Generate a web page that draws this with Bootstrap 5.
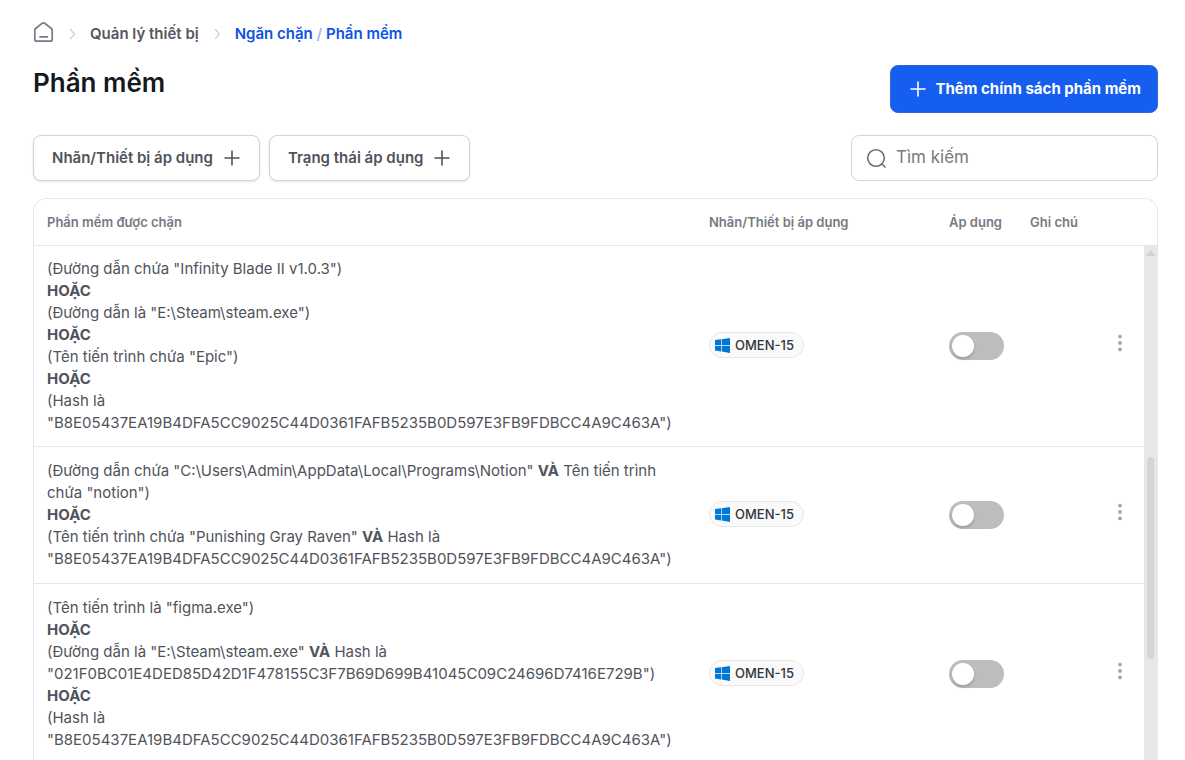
<!DOCTYPE html>
<html lang="vi">
<head>
<meta charset="utf-8">
<meta name="viewport" content="width=device-width, initial-scale=1">
<title>Phần mềm</title>
<link href="https://cdn.jsdelivr.net/npm/bootstrap@5.3.0/dist/css/bootstrap.min.css" rel="stylesheet">
<style>
body{font-family:Inter,"Noto Sans",sans-serif;font-size:15px;line-height:22px;color:#4b4f58;background:#fff}
.page{padding:21px 27px 0 33px}
.crumbs{gap:14px;height:26px;font-weight:600}
.crumbs a{text-decoration:none;color:#54575f}
.crumbs .current a{color:#0d53e6}
.crumbs .slash{color:#9db9f8}
.page-head{margin-top:18px;margin-bottom:22px}
.page-title{font-size:26px;line-height:36px;font-weight:600;color:#14181f}
.btn-add{height:48px;padding:0 16px 0 18px;gap:8px;border:1px solid #2e66dc;border-radius:8px;background:#155eef;color:#fff;font-size:15px;font-weight:700}
.btn-add:hover{background:#0f4fd0;color:#fff}
.toolbar{margin-bottom:17px}
.filters{gap:9px}
.btn-filter{height:46px;padding:0 18px;gap:10px;border:1px solid #d3d4d6;border-radius:8px;background:#fff;color:#50535b;font-size:15px;font-weight:600;box-shadow:0 1px 2px rgba(16,24,40,.12)}
.search{width:307px;height:46px;border:1px solid #d3d4d6;border-radius:8px;padding:0 14px;gap:9px}
.search input{font-size:17px;color:#4b4f58}
.search input::placeholder{color:#757a83;opacity:1}
.panel{min-height:0;border:1px solid #e7e7e7;border-bottom:0;border-radius:14px 14px 0 0;overflow:hidden}
.policies{table-layout:fixed;--bs-table-color:#50535b;--bs-table-bg:#fff;border-color:#e7e7e7}
.policies th{height:46px;padding:0 13px;font-size:13px;font-weight:600;color:#757a83;vertical-align:middle;white-space:nowrap}
.policies td{padding:13px}
.policies tbody tr:first-child td{padding-top:12px;padding-bottom:12px}
.policies strong{font-weight:700}
.c-device{width:240px}.c-apply{width:81px}.c-note{width:90px}.c-menu{width:50px}
.device{height:26px;padding:0 9px 0 5px;gap:5px;border:1px solid #e7e7e7;border-radius:13px;background:#fafafa;color:#30343b;font-size:13px;font-weight:500}
.form-switch .form-check-input.toggle{width:55px;height:28px;margin:0;float:none;border:0;background-color:#bdbdbd;background-image:none;box-shadow:none;position:relative}
.toggle::after{content:"";position:absolute;top:3px;left:3px;width:22px;height:22px;border-radius:50%;background:#fff;box-shadow:0 2px 3px rgba(0,0,0,.18);transition:left .2s}
.form-switch .form-check-input.toggle:checked{background-color:#155eef}
.toggle:checked::after{left:30px}
.kebab{width:26px;height:28px;margin-bottom:6px;border:0;background:none;color:#a2a4ab}
.scroll-track{position:absolute;top:47px;right:0;bottom:0;width:13px;background:#e7e7e7}
.scroll-track svg{position:absolute;top:4px;left:2px}
.scroll-thumb{position:absolute;top:41%;left:3px;width:7px;height:202px;border-radius:4px;background:#d5d5d5}
</style>
</head>
<body>
<svg class="d-none" aria-hidden="true">
<symbol id="plus" viewBox="0 0 16 16"><path d="M8 1v14M1 8h14" fill="none" stroke="currentColor" stroke-width="1.6" stroke-linecap="round"/></symbol>
<symbol id="chev" viewBox="0 0 8 12"><path d="M2 1l4.500 5L2 11" fill="none" stroke="#d3d4d7" stroke-width="1.4"/></symbol>
<symbol id="win" viewBox="0 0 15 15"><path fill="#0078d7" d="M0 2.100 6 1.300V7H0zM6.700 1.200 15 0V7H6.700zM0 7.700h6v5.700l-6-.8zM6.700 7.700H15V15l-8.300-1.500z"/></symbol>
<symbol id="dots" viewBox="0 0 4 18"><g fill="currentColor"><circle cx="2" cy="2.600" r="1.900"/><circle cx="2" cy="9" r="1.900"/><circle cx="2" cy="15.400" r="1.900"/></g></symbol>
</svg>
<main class="page d-flex flex-column vh-100 overflow-hidden">
<nav class="crumbs d-flex align-items-center" aria-label="Đường dẫn trang">
<a href="#" class="d-flex pb-1" aria-label="Trang chủ"><svg width="21" height="22" viewBox="0 0 21 22"><path d="M1.800 9.200Q1.800 8.200 2.600 7.500L9.400 2.200q1.100-.8 2.200 0l6.800 5.300q.8.700.8 1.700v9q0 2-2 2H3.800q-2 0-2-2zM7 15.800h7.500" fill="none" stroke="#757a83" stroke-width="1.700" stroke-linejoin="round" stroke-linecap="round"/></svg></a>
<svg width="8" height="12"><use href="#chev"/></svg>
<a href="#">Quản lý thiết bị</a>
<svg width="8" height="12"><use href="#chev"/></svg>
<span class="current"><a href="#">Ngăn chặn</a><span class="slash"> / </span><a href="#">Phần mềm</a></span>
</nav>
<header class="page-head d-flex justify-content-between align-items-start">
<h1 class="page-title mb-0">Phần mềm</h1>
<button type="button" class="btn btn-add d-flex align-items-center"><svg width="18" height="16"><use href="#plus"/></svg>Thêm chính sách phần mềm</button>
</header>
<div class="toolbar d-flex justify-content-between">
<div class="filters d-flex">
<button type="button" class="btn btn-filter d-flex align-items-center">Nhãn/Thiết bị áp dụng<svg width="18" height="16"><use href="#plus"/></svg></button>
<button type="button" class="btn btn-filter d-flex align-items-center">Trạng thái áp dụng<svg width="18" height="16"><use href="#plus"/></svg></button>
</div>
<label class="search d-flex align-items-center"><svg class="flex-shrink-0" width="21" height="20" viewBox="0 0 21 20" fill="none" stroke="#696d76" stroke-width="1.600" stroke-linecap="round"><circle cx="10" cy="10" r="8.300"/><path d="m16 16 3 3"/></svg><input type="search" class="form-control border-0 shadow-none p-0" placeholder="Tìm kiếm" aria-label="Tìm kiếm"></label>
</div>
<section class="panel position-relative flex-grow-1">
<table class="table policies align-middle mb-0">
<colgroup><col><col class="c-device"><col class="c-apply"><col class="c-note"><col class="c-menu"></colgroup>
<thead><tr><th scope="col">Phần mềm được chặn</th><th scope="col">Nhãn/Thiết bị áp dụng</th><th scope="col">Áp dụng</th><th scope="col">Ghi chú</th><th></th></tr></thead>
<tbody>
<tr>
<td>(Đường dẫn chứa "Infinity Blade II v1.0.3")<br><strong>HOẶC</strong><br>(Đường dẫn là "E:\Steam\steam.exe")<br><strong>HOẶC</strong><br>(Tên tiến trình chứa "Epic")<br><strong>HOẶC</strong><br>(Hash là "B8E05437EA19B4DFA5CC9025C44D0361FAFB5235B0D597E3FB9FDBCC4A9C463A")</td>
<td><span class="device d-inline-flex align-items-center"><svg width="15" height="15"><use href="#win"/></svg>OMEN-15</span></td>
<td><div class="form-switch d-flex p-0"><input class="form-check-input toggle" type="checkbox" role="switch" aria-label="Áp dụng chính sách 1"></div></td>
<td></td>
<td class="px-0"><button type="button" class="kebab d-flex align-items-center justify-content-center p-0" aria-label="Tùy chọn"><svg width="4" height="18"><use href="#dots"/></svg></button></td>
</tr>
<tr>
<td>(Đường dẫn chứa "C:\Users\Admin\AppData\Local\Programs\Notion" <strong>VÀ</strong> Tên tiến trình chứa "notion")<br><strong>HOẶC</strong><br>(Tên tiến trình chứa "Punishing Gray Raven" <strong>VÀ</strong> Hash là "B8E05437EA19B4DFA5CC9025C44D0361FAFB5235B0D597E3FB9FDBCC4A9C463A")</td>
<td><span class="device d-inline-flex align-items-center"><svg width="15" height="15"><use href="#win"/></svg>OMEN-15</span></td>
<td><div class="form-switch d-flex p-0"><input class="form-check-input toggle" type="checkbox" role="switch" aria-label="Áp dụng chính sách 2"></div></td>
<td></td>
<td class="px-0"><button type="button" class="kebab d-flex align-items-center justify-content-center p-0" aria-label="Tùy chọn"><svg width="4" height="18"><use href="#dots"/></svg></button></td>
</tr>
<tr>
<td>(Tên tiến trình là "figma.exe")<br><strong>HOẶC</strong><br>(Đường dẫn là "E:\Steam\steam.exe" <strong>VÀ</strong> Hash là "021F0BC01E4DED85D42D1F478155C3F7B69D699B41045C09C24696D7416E729B")<br><strong>HOẶC</strong><br>(Hash là "B8E05437EA19B4DFA5CC9025C44D0361FAFB5235B0D597E3FB9FDBCC4A9C463A")</td>
<td><span class="device d-inline-flex align-items-center"><svg width="15" height="15"><use href="#win"/></svg>OMEN-15</span></td>
<td><div class="form-switch d-flex p-0"><input class="form-check-input toggle" type="checkbox" role="switch" aria-label="Áp dụng chính sách 3"></div></td>
<td></td>
<td class="px-0"><button type="button" class="kebab d-flex align-items-center justify-content-center p-0" aria-label="Tùy chọn"><svg width="4" height="18"><use href="#dots"/></svg></button></td>
</tr>
</tbody>
</table>
<div class="scroll-track" aria-hidden="true"><svg width="9" height="7" viewBox="0 0 9 7"><path d="M4.500 0 9 6H0z" fill="#d0d0d0"/></svg><div class="scroll-thumb"></div></div>
</section>
</main>
<script src="https://cdn.jsdelivr.net/npm/bootstrap@5.3.0/dist/js/bootstrap.bundle.min.js"></script>
</body>
</html>
